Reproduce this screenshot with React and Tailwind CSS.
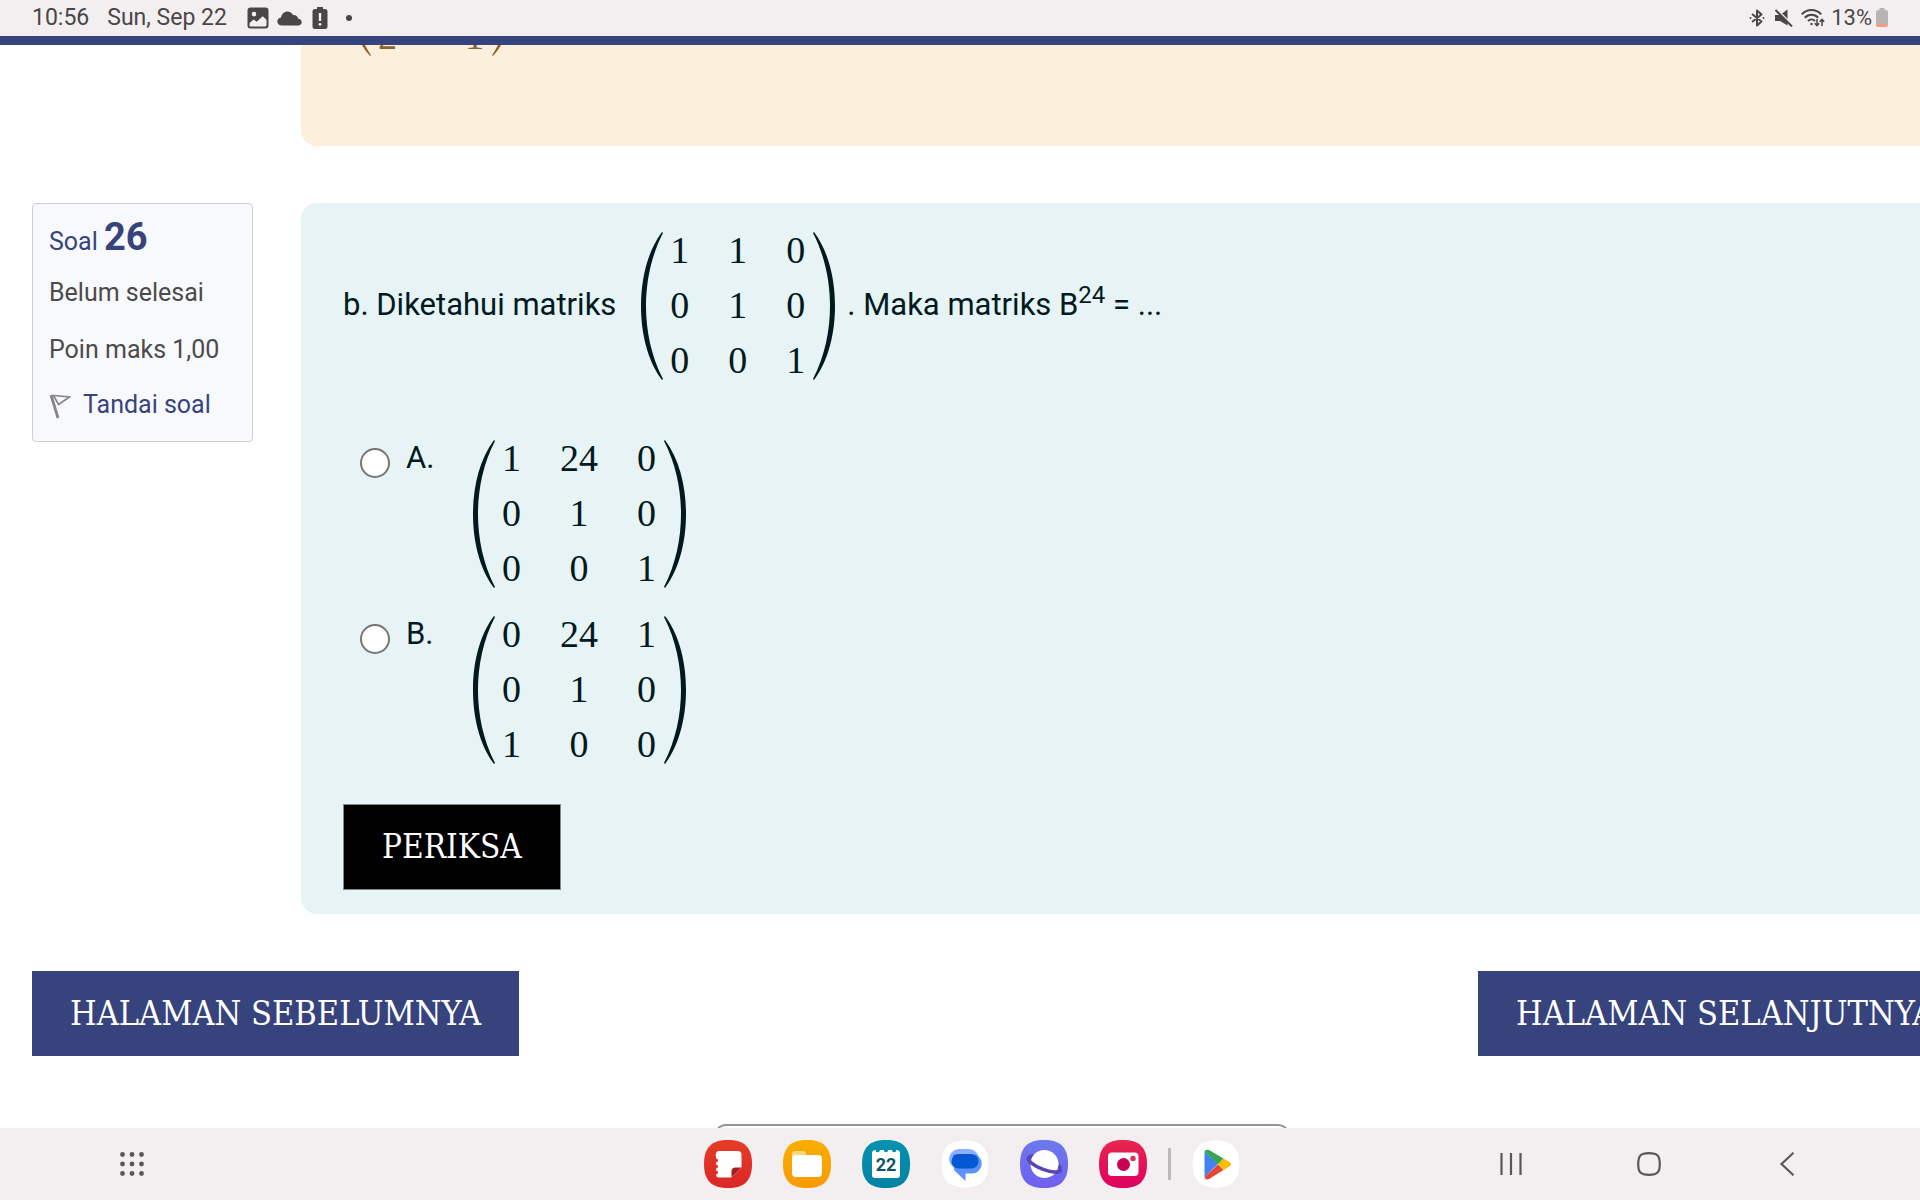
import React, { useState } from 'react';

const options = [
    { id: 'a', letter: 'A.', rows: [['1', '24', '0'], ['0', '1', '0'], ['0', '0', '1']] },
    { id: 'b', letter: 'B.', rows: [['0', '24', '1'], ['0', '1', '0'], ['1', '0', '0']] },
];

const questionMatrix = [['1', '1', '0'], ['0', '1', '0'], ['0', '0', '1']];

function Paren({ right, small }) {
    return (
        <svg
            className={`mb-2 shrink-0 ${small ? 'h-[94px] w-[18px]' : 'h-[148px] w-[22px]'} ${right ? '-scale-x-100' : ''}`}
            viewBox="0 0 22 148"
            preserveAspectRatio="none"
            fill="currentColor"
            aria-hidden="true"
        >
            <path d="M21 0C6 20 0 48 0 74S6 128 21 148L22 147C10 124 5 98 5 74S10 24 22 1Z" />
        </svg>
    );
}

function Matrix({ rows, small }) {
    return (
        <span className="flex items-end font-['Liberation_Serif',serif] text-[38px] leading-[55px]">
            <Paren small={small} />
            <span className={`grid pl-[7px] pr-2 text-center ${small ? 'grid-cols-[repeat(2,auto)] gap-x-[68px]' : 'grid-cols-[repeat(3,auto)] gap-x-[39px]'}`}>
                {rows.flat().map((value, index) => (
                    <span key={index}>{value}</span>
                ))}
            </span>
            <Paren right small={small} />
        </span>
    );
}

function StatusBar() {
    return (
        <header className="flex h-9 shrink-0 items-center bg-[#f3eff0] px-8 text-[23px] leading-9 text-[#4a4647]">
            <span>10:56</span>
            <span className="ml-[18px]">Sun, Sep 22</span>
            <svg className="ml-5 h-[22px] w-[22px]" viewBox="0 0 22 22">
                <path fill="currentColor" fillRule="evenodd" d="M3.500 0.500h15a3 3 0 0 1 3 3v15a3 3 0 0 1-3 3h-15a3 3 0 0 1-3-3v-15a3 3 0 0 1 3-3zM7 4.800a2.300 2.300 0 1 0 0 4.600 2.300 2.300 0 0 0 0-4.600zM2.500 16v2.300c0 .8.500 1.200 1.200 1.200h14.600c.7 0 1.200-.5 1.200-1.200v-5.500l-3.800-3.500-6 5.500-3-2.300z" />
            </svg>
            <svg className="ml-2 h-[15px] w-[25px]" viewBox="0 0 25 15" fill="currentColor">
                <path d="M5 14.500C2 14.500.3 12.700.3 10.500S2 6.700 4 6.500C4.800 2.800 7.300.5 10.300.5c2.600 0 4.600 1.400 5.700 3.600 2.600-.4 4.800 1.300 5.200 3.700 2 .2 3.500 1.600 3.500 3.400 0 1.900-1.500 3.300-3.500 3.300z" />
            </svg>
            <svg className="ml-[10px] h-[22px] w-4" viewBox="0 0 16 22">
                <path fill="currentColor" d="M5 0h6v2h2a2.500 2.500 0 0 1 2.500 2.500v15A2.500 2.500 0 0 1 13 22H3a2.500 2.500 0 0 1-2.500-2.500v-15A2.500 2.500 0 0 1 3 2h2z" />
                <path d="M8 6v8" stroke="#f3eff0" strokeWidth="2.400" />
                <circle cx="8" cy="17.300" r="1.400" fill="#f3eff0" />
            </svg>
            <span className="ml-[18px] h-[6px] w-[6px] rounded-full bg-[#4a4647]" />
            <div className="ml-auto flex items-center text-[22px]">
                <svg className="h-[18px] w-4" viewBox="0 0 16 18" fill="none" stroke="currentColor" strokeWidth="2" strokeLinejoin="round">
                    <path d="M3 5l9.500 7.500L8 16.500v-15l4.500 4L3 13" />
                    <circle cx="1.500" cy="9" r="1" fill="currentColor" stroke="none" />
                    <circle cx="14.500" cy="9" r="1" fill="currentColor" stroke="none" />
                </svg>
                <svg className="ml-[10px] h-[18px] w-[18px]" viewBox="0 0 18 18">
                    <path fill="currentColor" d="M0 6h5l7.500-5.500v16L5 12H0z" />
                    <path d="M1.500 0L18 17" stroke="#f3eff0" strokeWidth="2" />
                    <path d="M.5 1L17 17.500" stroke="currentColor" strokeWidth="2" />
                </svg>
                <svg className="ml-2 h-[18px] w-6" viewBox="0 0 24 18" fill="none" stroke="currentColor" strokeWidth="2">
                    <path d="M.8 5.300C6-.4 15-.4 20.200 5.300M3.800 8.700c3.800-4 9.600-4 13.400 0M7 12c2-2 5-2 7 0" />
                    <circle cx="10.500" cy="15" r="1.200" fill="currentColor" stroke="none" />
                    <path d="M16 10v6.500M13.800 14.300l2.200 2.400 2.200-2.400M21 17v-6.500M18.800 12.800L21 10.400l2.200 2.400" strokeWidth="1.500" />
                </svg>
                <span className="ml-[6px]">13%</span>
                <svg className="ml-1 h-5 w-3" viewBox="0 0 12 20">
                    <path fill="#b9b3b4" d="M3.500 0h5v2H10a2 2 0 0 1 2 2v12H0V4a2 2 0 0 1 2-2h1.500z" />
                    <path fill="#f29c82" d="M0 16h12v1a2 2 0 0 1-2 2H2a2 2 0 0 1-2-2z" />
                </svg>
            </div>
        </header>
    );
}

// Rounded launcher tile shared by all the dock apps
function AppTile({ label, from, to, children }) {
    const id = `tile-${label}`;
    return (
        <button type="button" aria-label={label} className="h-12 w-12">
            <svg viewBox="0 0 48 48" className="h-12 w-12">
                <defs>
                    <linearGradient id={id} x1="0" y1="0" x2="0" y2="1">
                        <stop offset="0" stopColor={from} />
                        <stop offset="1" stopColor={to} />
                    </linearGradient>
                </defs>
                <path
                    d="M24 0C40 0 48 7 48 24S40 48 24 48 0 41 0 24 8 0 24 0z"
                    fill={`url(#${id})`}
                    stroke={from === '#ffffff' ? '#e3e0e1' : 'none'}
                    strokeWidth="0.500"
                />
                {children}
            </svg>
        </button>
    );
}

function Dock() {
    return (
        <div className="flex items-center">
            <div className="flex gap-[31px]">
                <AppTile label="Notes" from="#e53c27" to="#da2727">
                    <path fill="#fff" d="M15 11h19q3.500 0 3.500 3.500V27.500L27.500 37.500H15q-3 0-3-3a2 2 0 0 0 0-4v-2a2 2 0 0 0 0-4v-2a2 2 0 0 0 0-4v-2a2 2 0 0 1 0-2.500q0-3 3-3z" />
                    <path fill="#a81c1f" d="M27.500 37.500v-6q0-4 4-4h6z" />
                </AppTile>
                <AppTile label="Files" from="#f8ae00" to="#f99a05">
                    <path fill="#fdd67c" d="M9 18v-4q0-3 3-3h8q2.500 0 3 2l1 3z" />
                    <rect x="9" y="15" width="30" height="22" rx="4" fill="#fff" />
                </AppTile>
                <AppTile label="Calendar" from="#0593ae" to="#0382a3">
                    <path fill="#fff" d="M13 10h.5a2.200 2.200 0 0 0 4.400 0h3.800a2.200 2.200 0 0 0 4.400 0h3.800a2.200 2.200 0 0 0 4.400 0h.7q3 .5 3 3v22q0 3-3 3H13q-3 0-3-3V13q0-2.500 3-3z" />
                    <text x="24" y="31" textAnchor="middle" fontSize="18" fontWeight="700" fill="#0b5566">22</text>
                </AppTile>
                <AppTile label="Messages" from="#ffffff" to="#ffffff">
                    <rect x="8" y="9" width="30" height="20" rx="10" fill="#8ab0ff" />
                    <path fill="#5b92ff" d="M12 14h19a9.700 9.700 0 0 1 0 19.500h-6.500V41L13 30z" />
                    <rect x="10.500" y="14" width="27" height="14.500" rx="7.250" fill="#0557d2" />
                </AppTile>
                <AppTile label="Internet" from="#6d79ec" to="#715ff0">
                    <g transform="translate(24.500 24) rotate(21)" fill="none" stroke="#5a45b8" strokeWidth="3.500">
                        <ellipse rx="17" ry="5.500" />
                        <circle r="14" fill="#fff" stroke="none" />
                        <path d="M-17 0A17 5.500 0 0 0 17 0" />
                    </g>
                </AppTile>
                <AppTile label="Camera" from="#e8264f" to="#de0060">
                    <rect x="9" y="12.500" width="30.500" height="23.500" rx="4" fill="#fff" />
                    <circle cx="24.500" cy="24.500" r="6.500" fill="#cb0053" />
                    <circle cx="34" cy="18.500" r="2.700" fill="#d8324f" />
                </AppTile>
            </div>
            <span className="mx-[21px] h-8 w-[3px] bg-[#bdb9ba]" />
            <AppTile label="Play" from="#ffffff" to="#ffffff">
                <path fill="#4384f3" d="M12.500 11.500v25.500L26 24z" />
                <path fill="#33a754" d="M12.500 13q0-4.500 4.500-3L31.500 18.500 26 24.500 12.500 11.500z" />
                <path fill="#e54436" d="M12.500 36q0 4.500 4.500 3L31.500 30 26 24.500 12.500 37z" />
                <path fill="#fbbc06" d="M31.500 18.500l6 3.500q3 2 0 4.500l-6 3.500-5.500-5.700z" />
            </AppTile>
        </div>
    );
}

function NavigationBar() {
    return (
        <footer className="grid h-[72px] shrink-0 grid-cols-[1fr_auto_1fr] items-center bg-[#f3eff0] pl-[120px] pr-[97px] text-[#5b5758]">
            <button type="button" aria-label="Apps" className="w-6">
                <svg viewBox="0 0 24 24" className="h-6 w-6" fill="currentColor">
                    {[2.5, 12, 21.5].map((y) =>
                        [2.5, 12, 21.5].map((x) => <circle key={`${x}-${y}`} cx={x} cy={y} r="2.400" />)
                    )}
                </svg>
            </button>
            <Dock />
            <div className="flex justify-end gap-[66px]">
                <button type="button" aria-label="Recents" className="flex w-[72px] justify-center">
                    <svg viewBox="0 0 24 24" className="h-6 w-6" stroke="currentColor" strokeWidth="2.200">
                        <path d="M2.500 1v22M12 1v22M21.500 1v22" />
                    </svg>
                </button>
                <button type="button" aria-label="Home" className="flex w-[72px] justify-center">
                    <svg viewBox="0 0 24 24" className="h-6 w-6" fill="none" stroke="currentColor" strokeWidth="2.200">
                        <path d="M12 1.200C20.500 1.200 22.800 3.500 22.800 12S20.500 22.800 12 22.800 1.200 20.500 1.200 12 3.500 1.200 12 1.200z" />
                    </svg>
                </button>
                <button type="button" aria-label="Back" className="flex w-[72px] justify-center">
                    <svg viewBox="0 0 24 24" className="h-6 w-6" fill="none" stroke="currentColor" strokeWidth="2.200">
                        <path d="M18.500 .8L6.500 12l12 11.200" />
                    </svg>
                </button>
            </div>
        </footer>
    );
}

function QuestionInfo() {
    return (
        <aside className="w-[221px] shrink-0 rounded border border-[#cad0d7] bg-[#f8f9fc] pb-[9px] pl-4 pt-[7px] text-[25px] text-[#4b4b4b]">
            <h3 className="h-[53px] leading-[52px] text-[#37437d]">
                Soal <span className="text-[38px] font-bold">26</span>
            </h3>
            <div className="leading-[57px]">Belum selesai</div>
            <div className="leading-[57px]">Poin maks 1,00</div>
            <a href="#flag" className="flex items-center leading-[54px] text-[#37437d]">
                <svg className="mr-3 mt-1 h-[26px] w-[22px]" viewBox="0 0 22 26" fill="none" stroke="#858585">
                    <path d="M2 1l7 23" strokeWidth="2.800" />
                    <path d="M4.500 1.500L20.500 3 9.500 10.500z" strokeWidth="1.600" />
                </svg>
                Tandai soal
            </a>
        </aside>
    );
}

export default function App() {
    const [answer, setAnswer] = useState('');

    return (
        <div className="flex h-screen flex-col overflow-hidden bg-white font-[Roboto,sans-serif]">
            <StatusBar />
            <main className="flex-1 overflow-hidden border-t-[9px] border-[#37437d]">
                {/* Feedback of the previous question, scrolled mostly out of view */}
                <section className="ml-[301px] h-[101px] rounded-bl-2xl bg-[#fcefdc] pl-[52px] text-[#8a6432]">
                    <div className="flex h-[19px] items-end overflow-hidden">
                        <Matrix small rows={[['2', '1']]} />
                    </div>
                </section>

                <section className="mt-[57px] flex items-start gap-12 pl-8">
                    <QuestionInfo />
                    <form
                        className="flex-1 rounded-l-2xl bg-[#e7f3f5] pb-6 pl-[42px] pt-5 text-[31px] text-[#001a1e]"
                        onSubmit={(e) => e.preventDefault()}
                    >
                        <div className="flex items-center">
                            <span>b. Diketahui matriks</span>
                            <span className="ml-[25px] mr-3">
                                <Matrix rows={questionMatrix} />
                            </span>
                            <span>
                                . Maka matriks B<sup className="text-[24px]">24</sup> = ...
                            </span>
                        </div>
                        <div className="mt-[43px] flex flex-col gap-[11px] pl-[17px]">
                            {options.map((option) => (
                                <div key={option.id} className="flex items-start">
                                    <input
                                        type="radio"
                                        id={option.id}
                                        name="answer"
                                        checked={answer === option.id}
                                        onChange={() => setAnswer(option.id)}
                                        className="mt-[17px] h-[30px] w-[30px] appearance-none rounded-full border-2 border-[#767676] bg-white checked:border-8"
                                    />
                                    <label htmlFor={option.id} className="ml-4 flex">
                                        <span className="w-[67px] leading-[53px]">{option.letter}</span>
                                        <Matrix rows={option.rows} />
                                    </label>
                                </div>
                            ))}
                        </div>
                        <button
                            type="submit"
                            className="mt-8 block h-[86px] border border-[#7d8a8c] bg-black px-[38px] font-['DejaVu_Serif_Condensed','DejaVu_Serif',serif] text-[33px] text-white"
                        >
                            PERIKSA
                        </button>
                    </form>
                </section>

                <div className="mt-[57px] flex justify-between pl-8 font-['DejaVu_Serif_Condensed','DejaVu_Serif',serif] text-[34px] leading-[85px] text-white">
                    <a href="#prev" className="bg-[#37437d] px-[38px]">HALAMAN SEBELUMNYA</a>
                    <a href="#next" className="w-[442px] overflow-hidden whitespace-nowrap bg-[#37437d] pl-[38px]">HALAMAN SELANJUTNYA</a>
                </div>

                <div className="mx-auto mt-[68px] h-14 w-[576px] translate-x-[42px] rounded-xl border-2 border-[#8f959e]" />
            </main>
            <NavigationBar />
        </div>
    );
}
